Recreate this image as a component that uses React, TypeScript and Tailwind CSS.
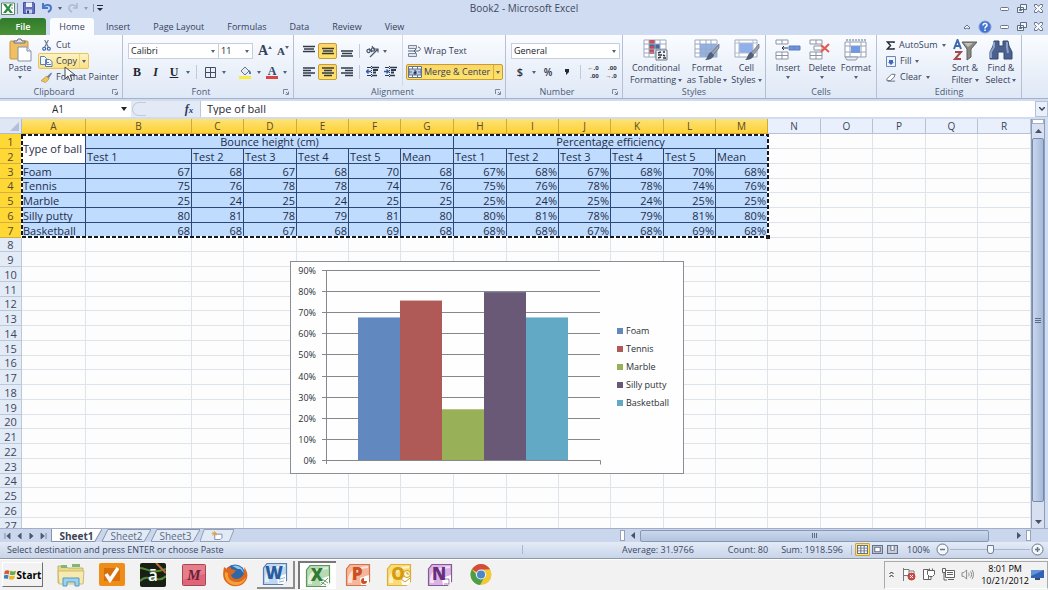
import { useState } from "react";
import type { ReactNode } from "react";

const COLUMNS = [
    { name: "A", width: "w-[64px]" },
    { name: "B", width: "w-[106px]" },
    { name: "C", width: "w-[52px]" },
    { name: "D", width: "w-[53px]" },
    { name: "E", width: "w-[52px]" },
    { name: "F", width: "w-[52px]" },
    { name: "G", width: "w-[53px]" },
    { name: "H", width: "w-[53px]" },
    { name: "I", width: "w-[52px]" },
    { name: "J", width: "w-[52px]" },
    { name: "K", width: "w-[53px]" },
    { name: "L", width: "w-[52px]" },
    { name: "M", width: "w-[52px]" },
    { name: "N", width: "w-[53px]" },
    { name: "O", width: "w-[52px]" },
    { name: "P", width: "w-[53px]" },
    { name: "Q", width: "w-[52px]" },
    { name: "R", width: "w-[53px]" },
];

const TESTS = ["Test 1", "Test 2", "Test 3", "Test 4", "Test 5", "Mean"];

const RESULTS = [
    { ball: "Foam", heights: [67, 68, 67, 68, 70, 68] },
    { ball: "Tennis", heights: [75, 76, 78, 78, 74, 76] },
    { ball: "Marble", heights: [25, 24, 25, 24, 25, 25] },
    { ball: "Silly putty", heights: [80, 81, 78, 79, 81, 80] },
    { ball: "Basketball", heights: [68, 68, 67, 68, 69, 68] },
];

const SERIES = [
    { name: "Foam", value: 68, color: "#6189c0" },
    { name: "Tennis", value: 76, color: "#af5a56" },
    { name: "Marble", value: 24.5, color: "#98b057" },
    { name: "Silly putty", value: 80, color: "#695977" },
    { name: "Basketball", value: 68, color: "#62a9c6" },
];

const ROW_COUNT = 27;

function Caret({ className = "" }: { className?: string }) {
    return (
        <svg viewBox="0 0 4 3" className={`h-[3px] w-[4px] shrink-0 ${className}`} fill="#56617a" aria-hidden="true">
            <path d="M0 0h4L2 3z" />
        </svg>
    );
}

function Separator() {
    return <span className="mx-[3px] h-[14px] w-px shrink-0 bg-[#c0cadd]" />;
}

function CaretButton({ label, className = "w-[10px]" }: { label: string; className?: string }) {
    return (
        <button type="button" aria-label={label} className={`flex h-[16px] shrink-0 items-center justify-center ${className}`}>
            <Caret />
        </button>
    );
}

function IconButton({ label, className = "w-[18px]", active = false, children }: { label: string; className?: string; active?: boolean; children: ReactNode }) {
    return (
        <button
            type="button"
            aria-label={label}
            className={`flex h-[16px] shrink-0 items-center justify-center ${className} ${active ? "rounded-[2px] border border-[#c79b35] bg-linear-to-b from-[#fbd667] to-[#fde36a]" : ""}`}
        >
            {children}
        </button>
    );
}

function Group({ title, launcher = false, className, children }: { title: string; launcher?: boolean; className: string; children: ReactNode }) {
    return (
        <section aria-label={title} className={`flex shrink-0 flex-col border-r border-[#b4c0d5] ${className}`}>
            <div className="flex min-h-0 flex-1">{children}</div>
            <div className={`relative h-[12px] text-center leading-[12px] text-[#4d5a76] ${launcher ? "pr-[14px]" : ""}`}>
                {title}
                {launcher && (
                    <button type="button" aria-label={`${title} options`} className="absolute right-[4px] top-[3px]">
                        <svg viewBox="0 0 6 6" className="h-[6px] w-[6px]" fill="none" stroke="#7c889f">
                            <path d="M.5 5V.5H5M2.5 5.5h3v-3M3 3l2 2" />
                        </svg>
                    </button>
                )}
            </div>
        </section>
    );
}

function BigButton({ lines, caret = "below", className, children }: { lines: string[]; caret?: "below" | "inline"; className: string; children: ReactNode }) {
    return (
        <button type="button" className={`flex shrink-0 flex-col items-center pt-[4px] leading-[12px] ${className}`}>
            <span className="mb-px flex h-[22px] items-center">{children}</span>
            {lines.map((line, i) => (
                <span key={line} className="flex items-center gap-[2px] whitespace-nowrap">
                    {line}
                    {caret === "inline" && i === lines.length - 1 && <Caret />}
                </span>
            ))}
            {caret === "below" && <Caret className="mt-[2px]" />}
        </button>
    );
}

function LinesIcon({ lines }: { lines: string }) {
    return (
        <svg viewBox="0 0 12 12" className="h-[12px] w-[12px]" stroke="#333b4a" strokeWidth="1.4" fill="none" aria-hidden="true">
            <path d={lines} />
        </svg>
    );
}

function IndentIcon({ flip = false }: { flip?: boolean }) {
    return (
        <svg viewBox="0 0 13 12" className="h-[12px] w-[13px]" fill="none" stroke="#2e394c" aria-hidden="true">
            <path d="M1 1.5h4M1 9.5h4" />
            <path d="M6 1.5h7M6 9.5h5" strokeWidth="1.5" />
            <path d="M7 4h5M7 6.5h3" strokeWidth="2" />
            <path d="M5.5 0v12" strokeDasharray="1 1" />
            <path d={flip ? "M0 5.5h5M2.5 3.5l2 2-2 2" : "M5 5.5H0M2.5 3.5l-2 2 2 2"} stroke="#2f5cab" strokeWidth="1.3" />
        </svg>
    );
}

function PasteIcon() {
    return (
        <svg viewBox="0 0 24 24" className="h-[24px] w-[24px]" aria-hidden="true">
            <rect x="2" y="3" width="18" height="18" rx="1" fill="#f0bf62" stroke="#c79645" />
            <path d="M6 5V3h3l1-2h3l1 2h3v2z" fill="#dce1ea" stroke="#687184" />
            <path d="M10 9h9l4 4v10H10z" fill="#fff" stroke="#8390ab" />
            <path d="M19 9v4h4" fill="#dbe4f5" stroke="#8390ab" />
        </svg>
    );
}

function GridIcon({ kind }: { kind: "conditional" | "table" | "style" }) {
    return (
        <svg viewBox="0 0 26 22" className="h-[22px] w-[26px]" aria-hidden="true">
            <path d="M1 1h22v17H1z" fill="#fff" stroke="#9da9bd" />
            {kind === "conditional" && (
                <>
                    <path d="M6 1h6v4H6zM6 10h5v5H6z" fill="#c8505a" />
                    <path d="M6 5h11v5H6z" fill="#47689f" />
                    <path d="M6 7h5v3H6z" fill="#b8485b" />
                </>
            )}
            {kind === "table" && <path d="M6 5h17v13H6z" fill="#91b1e9" />}
            {kind === "style" && <path d="M5 4h14v10H5z" fill="#8fb0ea" />}
            {kind === "style" ? (
                <path d="M5 1v17M1 4h22M1 14h22M19 1v17" stroke="#b2bdcf" fill="none" />
            ) : (
                <path d="M6 1v17M12 1v17M17 1v17M1 5h22M1 10h22M1 14h22" stroke="#9aa8c0" fill="none" />
            )}
            {kind === "conditional" ? (
                <>
                    <path d="M13 11h11v10H13z" fill="#f4f5f7" stroke="#6c7687" />
                    <path d="M15 14l3-1M15 16h4M20 13h2M15 19l3-1M20 16l2 1M20 19h3" stroke="#2e3543" strokeWidth="1.4" />
                </>
            ) : (
                <>
                    <path d="M25 5l-8 9 2 2 6-7z" fill="#9aa1ad" stroke="#626975" strokeWidth=".7" />
                    <path d="M17 13l3 3c-1 4-5 5-9 5 3-2 2-6 6-8z" fill="#535f78" />
                </>
            )}
        </svg>
    );
}

function CellsIcon({ kind }: { kind: "insert" | "delete" | "format" }) {
    if (kind === "format") {
        return (
            <svg viewBox="0 0 26 22" className="h-[22px] w-[26px]" aria-hidden="true">
                <path d="M2 3h21v15H2z" fill="#fff" stroke="#929dac" />
                <path d="M7 3v15M18 3v15M2 7h21M2 13h21" stroke="#98a5ba" />
                <path d="M8 7h9v7H8z" fill="#729ae0" />
                <path d="M3 1h20" stroke="#5b6b89" strokeDasharray="2 1" />
                <path d="M2 18h13l-2 3H4z" fill="#e9edf5" stroke="#8e99ad" />
            </svg>
        );
    }
    return (
        <svg viewBox="0 0 26 22" className="h-[22px] w-[26px]" aria-hidden="true">
            <path d="M1 1h12v4H1zM1 13h12v7H1zM7 1v4M7 13v7M1 16.5h12" fill="#fff" stroke="#8a94a5" />
            {kind === "insert" ? (
                <>
                    <path d="M14 7h11v4H14z" fill="#6d93da" stroke="#5c7dbd" />
                    <path d="M19 7v4" stroke="#5c7dbd" />
                    <path d="M13 9H7M9 7L7 9l2 2" fill="none" stroke="#24365c" />
                </>
            ) : (
                <>
                    <path d="M5 7h8v4H5z" fill="#fff" stroke="#8a94a5" />
                    <path d="M12 6l8 7M20 5l-8 8" stroke="#e05c50" strokeWidth="2" />
                </>
            )}
        </svg>
    );
}

function WindowButtons() {
    return (
        <>
            <button type="button" aria-label="Minimize" className="flex h-[13px] w-[17px] items-center justify-center">
                <svg viewBox="0 0 9 9" className="h-[9px] w-[9px]" fill="#fff" stroke="#69758c">
                    <rect x=".5" y="3.5" width="8" height="3" rx="1" />
                </svg>
            </button>
            <button type="button" aria-label="Restore" className="flex h-[13px] w-[17px] items-center justify-center">
                <svg viewBox="0 0 10 9" className="h-[9px] w-[10px]" fill="#f2f5fa" stroke="#5f6b82">
                    <path d="M3.5.5h6v5h-6zM.5 3.5h6v5h-6zM2.5 5.5h2v1h-2z" />
                </svg>
            </button>
            <button type="button" aria-label="Close" className="flex h-[13px] w-[17px] items-center justify-center">
                <svg viewBox="0 0 9 9" className="h-[9px] w-[9px]" fill="#f6f8fb" stroke="#5f6b82" strokeWidth=".9">
                    <path d="M.5.5H3l1.5 2L6 .5h2.5v2l-2 2 2 2v2H6l-1.5-2-1.5 2H.5v-2l2-2-2-2z" />
                </svg>
            </button>
        </>
    );
}

function TitleBar() {
    return (
        <header className="relative flex h-[18px] shrink-0 items-center justify-between pr-px pb-[2px]">
            <div className="flex items-center pl-px">
                <svg viewBox="0 0 14 13" className="h-[13px] w-[14px]" aria-hidden="true">
                    <path d="M.5 1h13v11.5H.5z" fill="#fff" stroke="#63886a" />
                    <path d="M2 2h3l2 3 2-3h2L8.5 6.5 12 11H9L7 8.5 5 11H2l3.5-4.5z" fill="#2c8d43" />
                    <path d="M10 3h2M10 6h2" stroke="#5aa169" />
                </svg>
                <span className="mx-[2px] h-[11px] w-px bg-[#8994aa]" />
                <button type="button" aria-label="Save" className="flex w-[18px] justify-center">
                    <svg viewBox="0 0 12 12" className="h-[12px] w-[12px]">
                        <path d="M.5.5h10l1 1v10H.5z" fill="#6571bd" stroke="#47509d" />
                        <path d="M3 .5h6V5H3z" fill="#edf1fb" />
                        <path d="M3 7.5h6v4H3z" fill="#c8d0ea" />
                        <path d="M4 8.5h2v3H4z" fill="#353f7c" />
                    </svg>
                </button>
                <button type="button" aria-label="Undo" className="flex w-[18px] justify-center">
                    <svg viewBox="0 0 12 12" className="h-[12px] w-[12px]" fill="none" stroke="#4c78c8" strokeWidth="2">
                        <path d="M2 1v5h5M2 5.5C4 2 10 2 10 6c0 2-1 3-3 4" />
                    </svg>
                </button>
                <CaretButton label="Undo history" className="w-[8px]" />
                <button type="button" aria-label="Redo" className="flex w-[18px] justify-center">
                    <svg viewBox="0 0 12 12" className="h-[12px] w-[12px]" fill="none" stroke="#b0bace" strokeWidth="1.5">
                        <path d="M10 1v5H6M10 5.5C8 2 2 2 2 6c0 2 1 3 3 4" />
                    </svg>
                </button>
                <CaretButton label="Redo history" className="w-[8px] opacity-50" />
                <span className="mx-[3px] h-[8px] w-px bg-[#8994aa]" />
                <button type="button" aria-label="Customize toolbar">
                    <svg viewBox="0 0 6 6" className="h-[6px] w-[6px]" fill="#222a38">
                        <path d="M0 0h6v1H0zM0 3h6L3 6z" />
                    </svg>
                </button>
            </div>
            <h1 className="absolute left-1/2 -translate-x-1/2 text-[10px] text-[#3f485c]">Book2 - Microsoft Excel</h1>
            <div className="flex">
                <WindowButtons />
            </div>
        </header>
    );
}

function RibbonTabs() {
    return (
        <nav className="flex h-[17px] shrink-0 items-stretch gap-px pr-px">
            <button type="button" className="mr-[3px] w-[46px] rounded-t-[3px] bg-linear-to-b from-[#2f7a2b] to-[#4a9237] font-semibold text-white">File</button>
            <button type="button" className="w-[44px] rounded-t-[3px] bg-[#fbfcff] font-medium">Home</button>
            {["Insert", "Page Layout", "Formulas", "Data", "Review", "View"].map((tab) => (
                <button type="button" key={tab} className="px-[11px]">{tab}</button>
            ))}
            <div className="ml-auto flex items-center">
                <button type="button" aria-label="Collapse ribbon" className="mr-[7px]">
                    <svg viewBox="0 0 8 6" className="h-[6px] w-[8px]" fill="#fff" stroke="#66738b">
                        <path d="M1 4l3-3 3 3-1 1-2-1-2 1z" />
                    </svg>
                </button>
                <button type="button" aria-label="Help" className="mr-[4px]">
                    <svg viewBox="0 0 14 14" className="h-[14px] w-[14px]">
                        <circle cx="7" cy="7" r="6" fill="#4474cf" stroke="#7d9bd4" />
                        <path d="M5 5.5c0-3 4.5-2.5 4 0C8.8 6.6 7 6.5 7 8.5M7 9.5V11" stroke="#fff" strokeWidth="1.5" fill="none" />
                    </svg>
                </button>
                <WindowButtons />
            </div>
        </nav>
    );
}

function ClipboardGroup() {
    return (
        <Group title="Clipboard" launcher className="w-[123px]">
            <BigButton lines={["Paste"]} className="w-[38px] pl-[2px]">
                <PasteIcon />
            </BigButton>
            <div className="flex flex-col pt-[2px]">
                <button type="button" className="flex h-[16px] items-center gap-[4px] pl-[3px]">
                    <svg viewBox="0 0 10 12" className="h-[11px] w-[11px]" fill="none" stroke="#3863ae" strokeWidth="1.3">
                        <path d="M3 0l4 8M7 0L3 8" stroke="#6f7b90" />
                        <circle cx="2.5" cy="9.5" r="1.6" />
                        <circle cx="7.5" cy="9.5" r="1.6" />
                    </svg>
                    Cut
                </button>
                <div className="flex h-[16px] w-[51px] rounded-[2px] border border-[#e6c45f] bg-linear-to-b from-[#fdf3c0] to-[#fbe183]">
                    <button type="button" className="flex items-center gap-[3px] pl-px">
                        <svg viewBox="0 0 13 11" className="h-[11px] w-[13px]" fill="#f3f7fe" stroke="#5d7eb7">
                            <path d="M.5.5h4l2 2v6h-6zM5.5 3.5h4L12 5.5v5H5.5z" />
                            <path d="M7 6.5h2M7 8.5h4" />
                        </svg>
                        Copy
                    </button>
                    <button type="button" aria-label="Copy options" className="ml-auto flex w-[9px] items-center justify-center border-l border-[#ecd27c]">
                        <Caret />
                    </button>
                </div>
                <button type="button" className="flex h-[16px] items-center gap-[4px] whitespace-nowrap pl-[3px]">
                    <svg viewBox="0 0 12 11" className="h-[11px] w-[11px]">
                        <path d="M11 0L6 5l2 2 4-6z" fill="#7181a0" />
                        <path d="M6 4l3 3-4 4-5-2z" fill="#efc658" stroke="#aa8a45" strokeWidth=".7" />
                    </svg>
                    Format Painter
                </button>
            </div>
        </Group>
    );
}

function FontGroup() {
    return (
        <Group title="Font" launcher className="w-[171px]">
            <div className="flex flex-col gap-[5px] pl-[5px] pt-[8px]">
                <div className="flex items-center">
                    <div className="relative flex w-[91px] items-center">
                        <select aria-label="Font" defaultValue="Calibri" className="h-[16px] w-full appearance-none border border-[#c5cfdf] bg-white pl-[2px] text-[#20242c]">
                            <option>Calibri</option>
                            <option>Cambria</option>
                        </select>
                        <Caret className="pointer-events-none absolute right-[4px]" />
                    </div>
                    <div className="relative flex w-[34px] items-center">
                        <select aria-label="Font size" defaultValue="11" className="h-[16px] w-full appearance-none border border-l-0 border-[#c5cfdf] bg-white pl-[2px] text-[#20242c]">
                            <option>11</option>
                            <option>12</option>
                        </select>
                        <Caret className="pointer-events-none absolute right-[4px]" />
                    </div>
                    <button type="button" aria-label="Grow font" className="ml-[3px] flex w-[18px] items-start justify-center font-['Liberation_Serif',serif] text-[14px] font-bold leading-[16px]">
                        A<Caret className="mt-[3px] rotate-180" />
                    </button>
                    <button type="button" aria-label="Shrink font" className="flex w-[18px] items-start justify-center font-['Liberation_Serif',serif] text-[11px] font-bold leading-[16px]">
                        A<Caret className="mt-[3px]" />
                    </button>
                </div>
                <div className="flex items-center font-['Liberation_Serif',serif] text-[12px] font-bold text-[#20242e]">
                    <IconButton label="Bold">B</IconButton>
                    <IconButton label="Italic" className="w-[19px] italic">I</IconButton>
                    <IconButton label="Underline" className="w-[18px] underline">U</IconButton>
                    <CaretButton label="Underline options" />
                    <Separator />
                    <IconButton label="Borders" className="ml-px w-[18px]">
                        <svg viewBox="0 0 11 11" className="h-[11px] w-[11px]" fill="none" stroke="#434e62">
                            <path d="M.5.5h10v10H.5zM5.5 0v11M0 5.5h11" />
                        </svg>
                    </IconButton>
                    <CaretButton label="Border options" />
                    <IconButton label="Fill color" className="ml-[6px] w-[20px]">
                        <svg viewBox="0 0 14 13" className="h-[13px] w-[14px]">
                            <path d="M3 5l4-4 4 4-4 4z" fill="#e8ebf0" stroke="#69758c" />
                            <path d="M11 4c2 1 2 3 2 4h-2z" fill="#4d75b9" />
                            <path d="M1 10h12v3H1z" fill="#f8ec3d" />
                        </svg>
                    </IconButton>
                    <CaretButton label="Fill color options" className="w-[8px]" />
                    <IconButton label="Font color" className="w-[18px]">
                        <span className="border-b-3 border-[#dc4444] px-[2px] text-[12px] leading-[10px] text-[#33476f]">A</span>
                    </IconButton>
                    <CaretButton label="Font color options" className="w-[8px]" />
                </div>
            </div>
        </Group>
    );
}

function AlignmentGroup() {
    return (
        <Group title="Alignment" launcher className="w-[212px]">
            <div className="flex flex-col gap-[5px] pl-[5px] pt-[8px]">
                <div className="flex items-center">
                    <IconButton label="Top align" className="w-[19px]"><LinesIcon lines="M0 1.5h12M1 4h10M0 6.5h12" /></IconButton>
                    <IconButton label="Middle align" active className="w-[19px]"><LinesIcon lines="M0 3.5h12M1 6h10M0 8.5h12" /></IconButton>
                    <IconButton label="Bottom align" className="w-[19px]"><LinesIcon lines="M0 6h12M1 8.5h10M0 11h12" /></IconButton>
                    <Separator />
                    <IconButton label="Orientation" className="w-[18px]">
                        <svg viewBox="0 0 13 13" className="h-[13px] w-[13px]" fill="none" stroke="#4b586e" strokeWidth="1.2">
                            <path d="M4 12l8-8M8.5 4H12v3.5" />
                            <circle cx="2.5" cy="6" r="1.6" />
                            <path d="M3 3.5L6 7M6 1l3 5" />
                            <circle cx="7" cy="4.5" r="1.6" />
                        </svg>
                    </IconButton>
                    <CaretButton label="Orientation options" className="w-[8px]" />
                </div>
                <div className="flex items-center">
                    <IconButton label="Align left" className="w-[19px]"><LinesIcon lines="M0 2h12M0 4.5h8M0 7h12M0 9.5h8" /></IconButton>
                    <IconButton label="Center" active className="w-[19px]"><LinesIcon lines="M0 2h12M2 4.5h8M0 7h12M2 9.5h8" /></IconButton>
                    <IconButton label="Align right" className="w-[19px]"><LinesIcon lines="M0 2h12M4 4.5h8M0 7h12M4 9.5h8" /></IconButton>
                    <Separator />
                    <IconButton label="Decrease indent"><IndentIcon /></IconButton>
                    <IconButton label="Increase indent"><IndentIcon flip /></IconButton>
                </div>
            </div>
            <div className="ml-auto flex flex-col gap-[5px] border-l border-[#cfd8e8] pl-[3px] pr-[2px] pt-[8px]">
                <button type="button" className="flex h-[16px] items-center gap-[3px] pl-[2px]">
                    <svg viewBox="0 0 13 12" className="h-[12px] w-[13px]" fill="#dfe4ec" stroke="#7b879c">
                        <path d="M.5.5h8v3h-8zM.5 8.5h8v3h-8z" />
                        <path d="M0 6h10c3 0 3-4 0-4M8 4L6 6l2 2" fill="none" stroke="#53617a" />
                    </svg>
                    Wrap Text
                </button>
                <div className="flex h-[16px] w-[97px] rounded-[2px] border border-[#c79b35] bg-linear-to-b from-[#fbd667] to-[#fde36a]">
                    <button type="button" className="flex items-center gap-[2px] whitespace-nowrap pl-px font-medium">
                        <svg viewBox="0 0 14 12" className="h-[12px] w-[14px]" stroke="#66738b">
                            <path d="M.5.5h13v11H.5z" fill="#fff" />
                            <path d="M1 3h12v6H1z" fill="#b8cdf2" />
                            <path d="M4.5 0v3M9.5 0v3M4.5 9v3M9.5 9v3M1 6h3M13 6h-3" />
                            <path d="M6 5h2v3H6V6.5h2" fill="none" stroke="#222c43" />
                        </svg>
                        Merge &amp; Center
                    </button>
                    <button type="button" aria-label="Merge options" className="ml-auto flex w-[9px] items-center justify-center border-l border-[#d7ad40]">
                        <Caret />
                    </button>
                </div>
            </div>
        </Group>
    );
}

function NumberGroup() {
    return (
        <Group title="Number" launcher className="w-[117px]">
            <div className="flex flex-1 flex-col gap-[5px] pl-[5px] pr-[2px] pt-[8px]">
                <div className="relative flex items-center">
                    <select aria-label="Number format" defaultValue="General" className="h-[16px] w-full appearance-none border border-[#c5cfdf] bg-white pl-[2px] text-[#20242c]">
                        <option>General</option>
                        <option>Percentage</option>
                    </select>
                    <Caret className="pointer-events-none absolute right-[4px]" />
                </div>
                <div className="flex items-center font-semibold text-[#2b3445]">
                    <IconButton label="Accounting format"><span className="text-[11px]">$</span></IconButton>
                    <CaretButton label="Accounting options" />
                    <IconButton label="Percent style" className="w-[18px]"><span className="text-[10px]">%</span></IconButton>
                    <IconButton label="Comma style" className="w-[20px]">
                        <svg viewBox="0 0 4 6" className="h-[6px] w-[4px]" fill="#20283a">
                            <path d="M0 0h4v3L1 6V3H0z" />
                        </svg>
                    </IconButton>
                    <Separator />
                    <IconButton label="Increase decimal">
                        <span className="flex flex-col items-end text-[6px] font-bold leading-[8px]"><span>←.0</span><span>.00</span></span>
                    </IconButton>
                    <IconButton label="Decrease decimal">
                        <span className="flex flex-col items-end text-[6px] font-bold leading-[8px]"><span>.00</span><span>→.0</span></span>
                    </IconButton>
                </div>
            </div>
        </Group>
    );
}

function EditingGroup() {
    return (
        <Group title="Editing" className="w-[145px]">
            <div className="flex w-[70px] flex-col pl-[9px] pt-[2px]">
                <button type="button" className="flex h-[16px] items-center gap-[4px]">
                    <svg viewBox="0 0 8 9" className="h-[9px] w-[9px]" fill="none" stroke="#252d3b" strokeWidth="1.5">
                        <path d="M7.5 2V1H1l3 3.5L1 8h6.5V7" />
                    </svg>
                    AutoSum
                    <Caret />
                </button>
                <button type="button" className="flex h-[16px] items-center gap-[4px]">
                    <svg viewBox="0 0 10 11" className="h-[11px] w-[10px]">
                        <path d="M.5.5h9v10h-9z" fill="#eef3fc" stroke="#6b87ba" />
                        <path d="M3 4h4v2h1L5 9 2 6h1z" fill="#3f69b8" />
                    </svg>
                    Fill
                    <Caret />
                </button>
                <button type="button" className="flex h-[16px] items-center gap-[4px]">
                    <svg viewBox="0 0 11 9" className="h-[9px] w-[10px]">
                        <path d="M1 6l5-5h4L9 4 5 8H1z" fill="#fff" stroke="#5f6b80" />
                        <path d="M2 8.5h8" stroke="#5f6b80" />
                    </svg>
                    Clear
                    <Caret />
                </button>
            </div>
            <BigButton lines={["Sort &", "Filter"]} caret="inline" className="w-[36px]">
                <svg viewBox="0 0 24 22" className="h-[22px] w-[24px]" aria-hidden="true">
                    <path d="M9 3h15l-6 7v8l-4 3V10z" fill="#898781" stroke="#605f5d" />
                    <path d="M11 4h9l-5 4z" fill="#c2c0bb" />
                    <path d="M1 10L4.5 1 8 10M2 7h5" fill="none" stroke="#3d67ae" strokeWidth="2" />
                    <path d="M2 13h6l-6 7h6" fill="none" stroke="#a54b47" strokeWidth="2" />
                </svg>
            </BigButton>
            <BigButton lines={["Find &", "Select"]} caret="inline" className="w-[36px]">
                <svg viewBox="0 0 24 22" className="h-[22px] w-[24px]" aria-hidden="true">
                    <path d="M5 2h5v5h4V2h5l1 5 3 6v7h-8v-7H9v7H1v-7l3-6z" fill="#4b608e" stroke="#354972" />
                    <path d="M5 3v5l-3 5v6M18 3v5l1 6" fill="none" stroke="#8ba0c9" strokeWidth="2" />
                </svg>
            </BigButton>
        </Group>
    );
}

function Ribbon() {
    return (
        <div className="flex h-[64px] shrink-0 overflow-hidden border-b border-[#a6b2c8] bg-linear-to-b from-[#fafcff] to-[#dfe8f6]">
            <ClipboardGroup />
            <FontGroup />
            <AlignmentGroup />
            <NumberGroup />
            <Group title="Styles" className="w-[143px]">
                <BigButton lines={["Conditional", "Formatting"]} caret="inline" className="w-[63px] pl-[3px]"><GridIcon kind="conditional" /></BigButton>
                <BigButton lines={["Format", "as Table"]} caret="inline" className="w-[42px]"><GridIcon kind="table" /></BigButton>
                <BigButton lines={["Cell", "Styles"]} caret="inline" className="w-[37px]"><GridIcon kind="style" /></BigButton>
            </Group>
            <Group title="Cells" className="w-[111px]">
                <BigButton lines={["Insert"]} className="ml-[5px] w-[34px]"><CellsIcon kind="insert" /></BigButton>
                <BigButton lines={["Delete"]} className="w-[34px]"><CellsIcon kind="delete" /></BigButton>
                <BigButton lines={["Format"]} className="w-[34px]"><CellsIcon kind="format" /></BigButton>
            </Group>
            <EditingGroup />
        </div>
    );
}

function FormulaBar() {
    const [formula, setFormula] = useState("Type of ball");

    return (
        <div className="my-[2px] flex h-[16px] shrink-0 items-stretch bg-white text-[#262a31]">
            <input aria-label="Name box" defaultValue="A1" className="w-[116px] bg-white text-center text-[10px] outline-none" />
            <button type="button" aria-label="Names" className="flex w-[15px] items-center justify-center">
                <svg viewBox="0 0 6 4" className="h-[4px] w-[6px]" fill="#20242c"><path d="M0 0h6L3 4z" /></svg>
            </button>
            <div className="flex w-[69px] bg-[#e3eaf6]">
                <span className="m-px w-[14px] rounded-l-full border border-r-0 border-[#c1cbdd]" />
                <button type="button" aria-label="Insert function" className="ml-auto w-[22px] font-['Liberation_Serif',serif] text-[12px] font-bold italic leading-[14px] text-[#2b3a5e]">
                    f<span className="text-[9px]">x</span>
                </button>
            </div>
            <input
                aria-label="Formula"
                value={formula}
                onChange={(e) => setFormula(e.target.value)}
                className="min-w-0 flex-1 border-l border-[#bcc7da] bg-white pl-[6px] text-[11px] outline-none"
            />
            <button type="button" aria-label="Expand formula bar" className="flex w-[13px] items-center justify-center border border-[#b5c1d6] bg-[#eaf0fa]">
                <svg viewBox="0 0 6 4" className="h-[4px] w-[6px]" fill="none" stroke="#3d485d" strokeWidth="1.5"><path d="M0 0l3 3 3-3" /></svg>
            </button>
        </div>
    );
}

function Chart() {
    const yFor = (value: number) => 199 - (value * 190) / 90;

    return (
        <figure aria-label="Percentage efficiency by ball" className="absolute left-[290px] top-[142px] h-[213px] w-[394px] border border-[#8a8f96] bg-[#fefefe]">
            <svg viewBox="0 0 392 211" className="h-full w-full font-['Open_Sans','Noto_Sans',sans-serif] text-[9px] font-medium" fill="#2b2f35">
                {[0, 10, 20, 30, 40, 50, 60, 70, 80, 90].map((tick) => (
                    <g key={tick}>
                        <path d={`M31 ${Math.round(yFor(tick)) - 0.5}H309`} stroke="#85888c" />
                        <text x="25" y={Math.round(yFor(tick)) + 3} textAnchor="end">{tick}%</text>
                    </g>
                ))}
                {SERIES.map((s, i) => (
                    <g key={s.name}>
                        <rect x={67 + i * 42} y={yFor(s.value)} width="42" height={198 - yFor(s.value)} fill={s.color} />
                        <rect x="326" y={66 + i * 18} width="6" height="6" fill={s.color} />
                        <text x="335" y={72 + i * 18}>{s.name}</text>
                    </g>
                ))}
                <path d="M35.5 8v194M31 198.5h278.5v4" fill="none" stroke="#85888c" />
            </svg>
        </figure>
    );
}

function Worksheet() {
    const rows = Array.from({ length: ROW_COUNT }, (_, i) => i + 1);
    const headCell = "h-[15px] border-r border-b p-0 text-center font-normal";
    const data = "border-r border-b border-[#2c4775] bg-[#bfdcff]";

    return (
        <div className="relative min-h-0 min-w-0 flex-1 overflow-hidden bg-[#fdfdfe]">
            <table className="w-px table-fixed border-separate border-spacing-0 whitespace-nowrap text-[11px] leading-[13px] text-[#1e2d4a]">
                <colgroup>
                    <col className="w-[22px]" />
                    {COLUMNS.map((col) => <col key={col.name} className={col.width} />)}
                </colgroup>
                <thead>
                    <tr className="text-[10px]">
                        <th className={`${headCell} border-[#aebacf] bg-[#dfe7f4]`}>
                            <svg viewBox="0 0 9 9" className="ml-auto mr-[2px] h-[9px] w-[9px]" fill="#b3c0d8"><path d="M9 0v9H0z" /></svg>
                        </th>
                        {COLUMNS.map((col, i) => (
                            <th
                                key={col.name}
                                scope="col"
                                className={`${headCell} ${i < 13 ? "border-[#d3a73a] bg-linear-to-b from-[#fde273] to-[#fdd12f] text-[#57492a]" : "border-[#b5c1d6] bg-[#e9f0fb] text-[#3b465c]"}`}
                            >
                                {col.name}
                            </th>
                        ))}
                    </tr>
                </thead>
                <tbody>
                    {rows.map((row) => {
                        const result = RESULTS[row - 3];
                        return (
                            <tr key={row} className={row % 4 === 0 ? "h-[14px]" : "h-[15px]"}>
                                <th
                                    scope="row"
                                    className={`border-r border-b p-0 text-center font-normal ${row <= 7 ? "border-[#d9ad3d] bg-[#fed835] text-[#57492a]" : "border-[#bcc8dc] bg-[#e3ebf7] text-[#3b465c]"}`}
                                >
                                    {row}
                                </th>
                                {row === 1 && (
                                    <>
                                        <td rowSpan={2} className="border-r border-b border-[#2c4775] bg-white p-0 pl-px">Type of ball</td>
                                        <td colSpan={6} className={`${data} p-0 text-center`}>Bounce height (cm)</td>
                                        <td colSpan={6} className={`${data} p-0 text-center`}>Percentage efficiency</td>
                                    </>
                                )}
                                {row === 2 && [...TESTS, ...TESTS].map((test, i) => (
                                    <td key={i} className={`${data} p-0 pl-px`}>{test}</td>
                                ))}
                                {result && (
                                    <>
                                        <td className={`${data} p-0 pl-px`}>{result.ball}</td>
                                        {result.heights.map((h, i) => <td key={i} className={`${data} p-0 pr-px text-right`}>{h}</td>)}
                                        {result.heights.map((h, i) => <td key={i} className={`${data} p-0 pr-px text-right`}>{h}%</td>)}
                                    </>
                                )}
                                {COLUMNS.slice(row <= 7 ? 13 : 0).map((col) => (
                                    <td key={col.name} className="border-r border-b border-[#dfe3ea] p-0" />
                                ))}
                            </tr>
                        );
                    })}
                </tbody>
            </table>

            {/* copied range outline */}
            <svg className="pointer-events-none absolute left-[21px] top-[15px] h-[105px] w-[749px]" viewBox="0 0 749 105" fill="none" strokeWidth="2">
                <rect x="1" y="1" width="746" height="102" stroke="#fff" />
                <rect x="1" y="1" width="746" height="102" stroke="#15181f" strokeDasharray="4 2" />
                <path d="M745 101h4v4h-4z" fill="#15181f" />
            </svg>
            <Chart />
        </div>
    );
}

function VerticalScrollbar() {
    return (
        <div className="mr-[3px] flex w-[14px] shrink-0 flex-col items-center border-x border-[#8d9cb8] bg-[#d6e0f0]">
            <span className="h-[5px] w-full border border-[#a3b0c7] bg-white" />
            <button type="button" aria-label="Scroll up" className="flex h-[14px] items-center">
                <svg viewBox="0 0 7 4" className="h-[4px] w-[7px]" fill="#45526a"><path d="M0 4h7L3.5 0z" /></svg>
            </button>
            <div className="flex w-full flex-1 flex-col items-center justify-center gap-px rounded-[2px] border border-[#7889a9] bg-linear-to-r from-[#c9d7ed] to-[#a5b9da]">
                <span className="h-px w-[6px] bg-[#5c6b87]" />
                <span className="h-px w-[6px] bg-[#5c6b87]" />
                <span className="h-px w-[6px] bg-[#5c6b87]" />
            </div>
            <div className="h-[14px]" />
            <button type="button" aria-label="Scroll down" className="flex h-[12px] items-center">
                <svg viewBox="0 0 7 4" className="h-[4px] w-[7px]" fill="#45526a"><path d="M0 0h7L3.5 4z" /></svg>
            </button>
        </div>
    );
}

function SheetTab({ name, active = false, className, children }: { name: string; active?: boolean; className: string; children?: ReactNode }) {
    return (
        <button type="button" aria-label={name} className={`relative flex h-[13px] items-center justify-center text-[10px] ${className} ${active ? "font-bold text-[#3a4458]" : "text-[#5d6a84]"}`}>
            <svg viewBox="0 0 50 13" preserveAspectRatio="none" className="absolute inset-0 h-full w-full" stroke="#8794ad" aria-hidden="true">
                <path d={active ? "M.5 0v12.5H43L50 0" : "M0 12.5L6 .5h44l-7 12z"} fill={active ? "#fff" : "#e2eaf6"} />
            </svg>
            <span className="relative">{children ?? name}</span>
        </button>
    );
}

function SheetBar() {
    return (
        <div className="flex h-[14px] shrink-0 items-center border-t border-[#a1aec5] bg-[#c9d6eb]">
            <div className="flex w-[51px] justify-around px-px">
                {[
                    { label: "First sheet", path: "M1 0v7M7 0v7L3 3.5z" },
                    { label: "Previous sheet", path: "M6 0v7L2 3.5z" },
                    { label: "Next sheet", path: "M2 0v7l4-3.5z" },
                    { label: "Last sheet", path: "M1 0v7l4-3.5zM7 0v7" },
                ].map((item) => (
                    <button type="button" key={item.label} aria-label={item.label}>
                        <svg viewBox="0 0 8 7" className="h-[6px] w-[7px]" fill="#4b5871" stroke="#4b5871" strokeWidth=".7"><path d={item.path} /></svg>
                    </button>
                ))}
            </div>
            <SheetTab name="Sheet1" active className="w-[51px]" />
            <SheetTab name="Sheet2" className="w-[49px]" />
            <SheetTab name="Sheet3" className="w-[49px]" />
            <SheetTab name="Insert sheet" className="w-[34px]">
                <svg viewBox="0 0 12 10" className="h-[9px] w-[12px]">
                    <path d="M3.5 3.5h8v4l-2 2h-6z" fill="#fff" stroke="#7384a8" />
                    <path d="M3 0v6M0 3h6M1 1l4 4M5 1L1 5" stroke="#dba33c" />
                </svg>
            </SheetTab>
            <div className="ml-auto flex h-full w-[411px] items-center">
                <span className="h-[11px] w-[5px] border border-[#94a3bd] bg-white" />
                <button type="button" aria-label="Scroll left" className="flex w-[15px] justify-center">
                    <svg viewBox="0 0 4 7" className="h-[7px] w-[4px]" fill="#45526a"><path d="M4 0v7L0 3.5z" /></svg>
                </button>
                <div className="flex h-[12px] w-[349px] items-center justify-center gap-px rounded-[2px] border border-[#8797b5] bg-linear-to-b from-[#cbd8ec] to-[#b3c4df]">
                    <span className="h-[5px] w-px bg-[#5c6b87]" />
                    <span className="h-[5px] w-px bg-[#5c6b87]" />
                    <span className="h-[5px] w-px bg-[#5c6b87]" />
                </div>
                <button type="button" aria-label="Scroll right" className="ml-auto flex w-[14px] justify-center">
                    <svg viewBox="0 0 4 7" className="h-[7px] w-[4px]" fill="#45526a"><path d="M0 0v7l4-3.5z" /></svg>
                </button>
                <span className="h-[11px] w-[5px] border border-[#94a3bd] bg-white" />
            </div>
            <span className="w-[17px]" />
        </div>
    );
}

function StatusBar() {
    return (
        <footer className="flex h-[17px] shrink-0 items-center border-b border-[#8e98a9] bg-linear-to-b from-[#e4ebf7] to-[#c8d4e9] pr-[4px] pb-px pl-[7px] text-[#3c475f]">
            <span>Select destination and press ENTER or choose Paste</span>
            <span className="ml-auto h-[9px] w-px bg-[#aab6cc]" />
            <div className="flex w-[521px] items-center justify-end">
                <span className="mr-[34px]">Average: 31.9766</span>
                <span className="mr-[13px]">Count: 80</span>
                <span>Sum: 1918.596</span>
                <span className="mr-[3px] ml-[8px] h-[10px] w-px bg-[#aab6cc]" />
                {["M0 3.5h10M0 6.5h10M3.5 1v8M6.5 1v8", "M2.5 2.5h5v5h-5z", "M3.5 1v5h3V1"].map((path, i) => (
                    <button
                        type="button"
                        key={path}
                        aria-label={["Normal view", "Page layout view", "Page break view"][i]}
                        className={`flex h-[13px] w-[15px] items-center justify-center ${i === 0 ? "rounded-[1px] border border-[#cda43b] bg-[#fbe273]" : ""}`}
                    >
                        <svg viewBox="0 0 10 10" preserveAspectRatio="none" className="h-[9px] w-[11px]" fill="#fff" stroke="#66728a"><path d="M.5.5h9v9h-9z" fill={i === 0 ? "#fff" : "#c9cfda"} /><path d={path} /></svg>
                    </button>
                ))}
                <button type="button" className="ml-[7px] w-[25px] text-left">100%</button>
                <button type="button" aria-label="Zoom out" className="ml-[4px]">
                    <svg viewBox="0 0 13 13" className="h-[13px] w-[13px]" fill="#f4f7fc" stroke="#687489"><circle cx="6.5" cy="6.5" r="5.5" /><path d="M4 6.5h5" strokeWidth="1.5" /></svg>
                </button>
                <input
                    type="range"
                    aria-label="Zoom"
                    defaultValue={50}
                    className="mx-px h-[12px] w-[80px] appearance-none bg-transparent [&::-webkit-slider-runnable-track]:h-px [&::-webkit-slider-runnable-track]:bg-[#a9b6cc] [&::-webkit-slider-thumb]:-mt-[4px] [&::-webkit-slider-thumb]:h-[9px] [&::-webkit-slider-thumb]:w-[7px] [&::-webkit-slider-thumb]:appearance-none [&::-webkit-slider-thumb]:rounded-b-[3px] [&::-webkit-slider-thumb]:border [&::-webkit-slider-thumb]:border-[#6d7a92] [&::-webkit-slider-thumb]:bg-[#f4f7fc]"
                />
                <button type="button" aria-label="Zoom in">
                    <svg viewBox="0 0 13 13" className="h-[13px] w-[13px]" fill="#f4f7fc" stroke="#687489"><circle cx="6.5" cy="6.5" r="5.5" /><path d="M4 6.5h5M6.5 4v5" strokeWidth="1.5" /></svg>
                </button>
            </div>
        </footer>
    );
}

function OfficeIcon({ letter, color, tint }: { letter: string; color: string; tint: string }) {
    return (
        <svg viewBox="0 0 26 24" className="h-[24px] w-[26px]" aria-hidden="true">
            <path d="M5 1.5h19.5v17l-4 4h-19V6z" fill={tint} stroke={color} strokeWidth="1.2" strokeOpacity=".75" />
            <path d="M3 20C2 9 9 4 23 3v2C12 6 7 11 7 20z" fill="#fff" fillOpacity=".6" />
            <path d="M15 15l9-3v8l-2 2h-6z" fill="#fff" />
            <text x="12" y="17" textAnchor="middle" fontSize="17" fontWeight="800" fill={color} className="font-['Open_Sans',sans-serif]">{letter}</text>
            {letter === "X" && <path d="M17 15l6 4M16 18l5 3M16 21l7-7" stroke={color} strokeWidth=".7" />}
            {letter === "W" && <path d="M17 17.5l6-2M17 20l5-1" stroke={color} strokeWidth=".5" />}
            {letter === "P" && <path d="M19 15a3 3 0 1 0 3 3h-3z" fill={color} />}
            {letter === "O" && <><circle cx="21" cy="11" r="3.5" fill="#fff8d8" stroke={color} /><path d="M21 9v2h2M15 16l4 3 5-4" fill="none" stroke={color} /></>}
            {letter === "N" && <path d="M17 16h5v5h-5" fill="none" stroke={color} strokeWidth=".6" />}
        </svg>
    );
}

const TASKS = [
    {
        name: "Explorer",
        icon: (
            <svg viewBox="0 0 28 24" className="h-[24px] w-[28px]" aria-hidden="true">
                <path d="M1 3h8l2 2h15v15H1z" fill="#ead985" stroke="#b6a65e" strokeWidth=".8" />
                <path d="M4 2h6v3H4zM15 1h8v3h-8z" fill="#7fb776" />
                <path d="M1 8h26l-1 13H2z" fill="#f6eab0" stroke="#c2b36b" strokeWidth=".8" />
                <path d="M6 23v-8h16v8h-4v-4h-8v4z" fill="#9bd2ef" stroke="#5199c2" />
            </svg>
        ),
    },
    {
        name: "Check",
        icon: (
            <svg viewBox="0 0 26 24" className="h-[24px] w-[26px]" aria-hidden="true">
                <rect x="0" y="0" width="26" height="23" rx="2" fill="#ee8d17" />
                <rect x="5" y="5" width="16" height="13" fill="#d86f0b" />
                <path d="M7 11l4 6 8-12" fill="none" stroke="#fff" strokeWidth="3.5" />
            </svg>
        ),
    },
    {
        name: "Dictionary",
        icon: (
            <svg viewBox="0 0 26 24" className="h-[24px] w-[26px]" aria-hidden="true">
                <rect width="26" height="24" rx="2" fill="#172012" />
                <path d="M0 5c8 0 10 7 26 1M0 18c8-9 18 4 26-5" fill="none" stroke="#55863b" strokeWidth="2" />
                <path d="M16 0l10 10" stroke="#b66a35" strokeWidth="2" />
                <text x="13" y="18" textAnchor="middle" fontSize="17" fontWeight="600" fill="#fff" className="font-['Open_Sans',sans-serif]">ā</text>
            </svg>
        ),
    },
    {
        name: "Mendeley",
        icon: (
            <svg viewBox="0 0 24 22" className="h-[22px] w-[24px]" aria-hidden="true">
                <rect x=".5" y=".5" width="23" height="21" rx="1" fill="#df6679" stroke="#a94454" />
                <path d="M1 1h22v9C15 11 8 13 1 16z" fill="#ec8e9a" fillOpacity=".6" />
                <text x="12" y="16" textAnchor="middle" fontSize="15" fontWeight="700" fontStyle="italic" fill="#6c2037" className="font-['Liberation_Serif',serif]">M</text>
            </svg>
        ),
    },
    {
        name: "Firefox",
        icon: (
            <svg viewBox="0 0 26 24" className="h-[24px] w-[26px]" aria-hidden="true">
                <circle cx="13" cy="12" r="10.5" fill="#2f68a8" />
                <path d="M10 3c5-2 11 1 12 7-3-2-2-4-5-4-3 0-3-2-7-3z" fill="#8fc8e9" />
                <path d="M2 4l3 2 3-3c0 3 3 4 6 4l-2 3-3 2c1 4 6 5 9 3 4-2 5-7 4-11 5 6 4 12 0 16-5 5-14 4-18-1-4-4-3-10-2-15z" fill="#df671f" />
                <path d="M3 9c-1 8 4 12 9 13 6 1 11-3 12-8 0 0-4 6-10 5-5 0-9-4-8-9z" fill="#f3a23a" />
            </svg>
        ),
    },
    { name: "Word", icon: <OfficeIcon letter="W" color="#275c9e" tint="#bfd7f1" /> },
    { name: "Excel", icon: <OfficeIcon letter="X" color="#2f7a34" tint="#b8d9b1" /> },
    { name: "PowerPoint", icon: <OfficeIcon letter="P" color="#ca5023" tint="#f5b79c" /> },
    { name: "Outlook", icon: <OfficeIcon letter="O" color="#d69a12" tint="#f8dd77" /> },
    { name: "OneNote", icon: <OfficeIcon letter="N" color="#682d80" tint="#d9b3e2" /> },
    {
        name: "Chrome",
        icon: (
            <svg viewBox="0 0 24 24" className="h-[23px] w-[24px]" aria-hidden="true">
                <circle cx="12" cy="12" r="11" fill="#f1c936" />
                <path d="M12 12L2.5 6.5A11 11 0 0 1 21.5 6.5L12 7z" fill="#d34b3c" />
                <path d="M2.5 6.5A11 11 0 0 0 11 23l5-9-4-2-4 1z" fill="#4d9d4c" />
                <circle cx="12" cy="12" r="5.3" fill="#eef3f8" />
                <circle cx="12" cy="12" r="4.2" fill="#4c86c9" />
            </svg>
        ),
    },
];

function Taskbar() {
    return (
        <div className="flex h-[31px] shrink-0 items-center border-t border-[#fff] bg-[#f3f2f3] pb-px pl-[2px] text-black">
            <button type="button" className="mr-[7px] flex h-[25px] w-[41px] items-center justify-center gap-px border border-t-white border-r-[#6f6f6f] border-b-[#6f6f6f] border-l-white text-[10px] font-bold">
                <svg viewBox="0 0 13 12" className="h-[11px] w-[12px]" aria-hidden="true">
                    <path d="M1 2c2-1 3-1 5 0L5 6C3 5 2 5 0 6z" fill="#d9552d" />
                    <path d="M7 2c2 1 4 1 6 0l-1 4c-2 1-4 1-6 0z" fill="#71aa3c" />
                    <path d="M0 7c2-1 3-1 5 0l-1 4c-2-1-3-1-5 0z" fill="#3f7dc2" />
                    <path d="M6 7c2 1 4 1 6 0l-1 4c-2 1-4 1-6 0z" fill="#ecb72e" />
                </svg>
                Start
            </button>
            {TASKS.map((task) => (
                <div key={task.name} className="flex w-[41px] justify-center">
                    <button
                        type="button"
                        aria-label={task.name}
                        className={`flex h-[28px] w-[38px] items-center justify-center ${task.name === "Word" ? "border-r-2 border-b-2 border-[#8d8d8d]" : ""} ${task.name === "Excel" ? "border-t-2 border-l-2 border-[#77787a] bg-white" : ""}`}
                    >
                        {task.icon}
                    </button>
                </div>
            ))}
            <div className="ml-auto flex h-[28px] w-[164px] items-center border border-[#aaa] border-b-white pl-[4px]">
                <button type="button" aria-label="Show hidden icons" className="w-[8px]">
                    <svg viewBox="0 0 5 7" className="h-[7px] w-[5px]" fill="none" stroke="#222"><path d="M.5 3l2-2 2 2M.5 6l2-2 2 2" /></svg>
                </button>
                <svg viewBox="0 0 14 13" className="ml-[5px] h-[13px] w-[14px]" fill="#fff" stroke="#77787b">
                    <path d="M1.5 0v13M2 1.5h5v6H2M7 3h5v5H7" />
                    <circle cx="9.5" cy="8.5" r="3.5" fill="#d6483e" stroke="#b4443d" />
                    <path d="M8 7l3 3M11 7l-3 3" stroke="#fff" />
                </svg>
                <svg viewBox="0 0 13 13" className="ml-[6px] h-[13px] w-[13px]" fill="#fff" stroke="#626367">
                    <path d="M1.5 1.5h5v10h-5z" />
                    <path d="M5.5 2.5h7v4l-2 2h-3l-2-2zM7.5.5v2M10.5.5v2M9 8.5v3H6" />
                </svg>
                <svg viewBox="0 0 13 13" className="ml-[7px] h-[13px] w-[13px]" fill="#fff" stroke="#626367">
                    <path d="M3.5 2.5h9v7h-9zM5 4.5h6M5 6.5h6M6 11.5h6M.5.5h3v4h-3zM2 5v7h3" />
                </svg>
                <svg viewBox="0 0 13 12" className="ml-[6px] h-[11px] w-[13px]" fill="none" stroke="#808286">
                    <path d="M.5 4h2l3-3v10l-3-3h-2zM7.5 4c1 1 1 3 0 4M9.5 2.5c2 2 2 5 0 7M11.5 1c2 3 2 7 0 10" />
                </svg>
                <time className="ml-auto text-center text-[9px] leading-[12px]">
                    8:01 PM
                    <br />
                    10/21/2012
                </time>
                <button type="button" aria-label="Show desktop" className="ml-[2px] mr-[3px]">
                    <svg viewBox="0 0 13 10" className="h-[10px] w-[13px]"><path d="M0 0h13v8H0z" fill="#3262b8" /><path d="M0 0h13L0 6z" fill="#6792d8" /><path d="M4 8h5v2H4z" fill="#394b69" /></svg>
                </button>
            </div>
        </div>
    );
}

export default function App() {
    return (
        <div className="relative flex h-screen flex-col overflow-hidden bg-[#d0dcf2] font-['Open_Sans','Noto_Sans',sans-serif] text-[9px] leading-[12px] text-[#36415a]">
            <TitleBar />
            <RibbonTabs />
            <Ribbon />
            <FormulaBar />
            <main className="flex min-h-0 flex-1">
                <Worksheet />
                <VerticalScrollbar />
            </main>
            <SheetBar />
            <StatusBar />
            <Taskbar />

            {/* mouse pointer */}
            <svg viewBox="0 0 12 16" className="pointer-events-none absolute left-[64px] top-[66px] h-[16px] w-[12px]" fill="#fff" fillOpacity=".8" stroke="#4b4b50">
                <path d="M1 1v12l3-3 2 5 2-1-2-5h5z" />
            </svg>
        </div>
    );
}
